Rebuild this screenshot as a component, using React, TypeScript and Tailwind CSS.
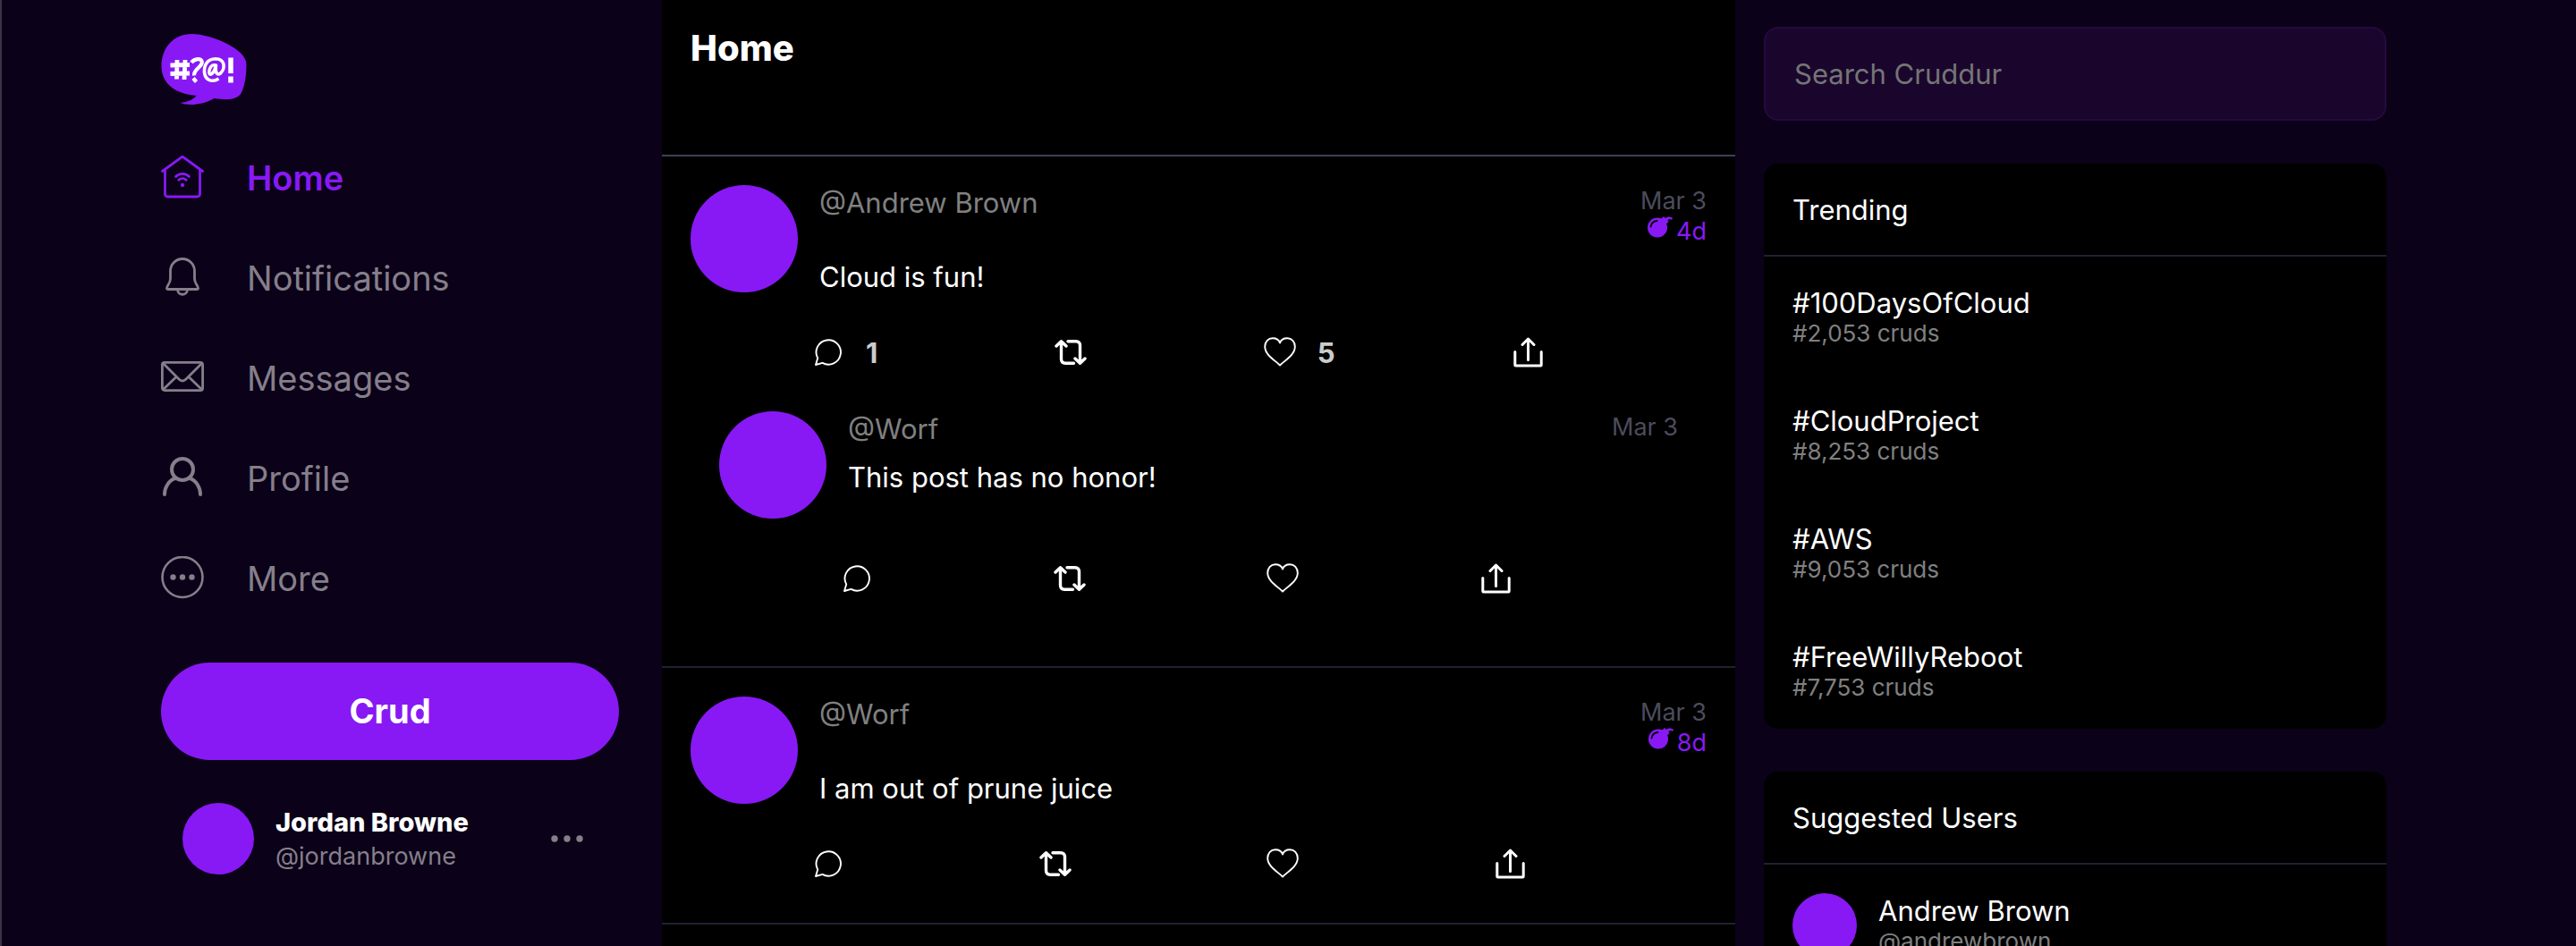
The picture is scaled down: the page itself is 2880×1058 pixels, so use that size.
import React from "react";

type IconProps = { className?: string };

const line = {
  fill: "none",
  stroke: "currentColor",
  strokeLinecap: "round" as const,
  strokeLinejoin: "round" as const,
};

function Logo() {
  return (
    <svg viewBox="0 0 95 80" className="h-20 w-24" role="img" aria-label="Cruddur">
      <path
        fill="#8819f5"
        d="M34 0C54 0 95 16 95 34C95 50 92 62 88 68C82 74 72 74 59 72C50 77 41 79 33 79C28 79 24 78 21 77C30 76 36 73 39 69C16 67 0 56 0 36C0 16 13 0 34 0Z"
      />
      <g fill="none" stroke="#fff" strokeWidth="4.800" strokeLinecap="butt" strokeLinejoin="round">
        <path d="M17.500 29L17 50.500M26.500 29L25.500 51M10 35L31.500 34.500M10 44.500L31.500 44" />
        <path strokeWidth="4.200" d="M33.500 32C37 27.500 45 26.500 45.300 31.500C45.500 37 36 39 36.500 46.500M35.500 49.500L39 53.500" />
        <path strokeWidth="3.600" d="M60 35C56 33.500 53 39 53.300 43C54 48 59 44 61 35C60 43 62 47 66 44C72 38 71 28 60.500 27.800C51 28 47.500 35 48 43C49 52 57 54.500 64 50" />
        <path strokeWidth="5.500" d="M77.500 26.500L77.500 44M77.500 47.500L77.500 54.500" />
      </g>
    </svg>
  );
}

function HomeIcon({ className }: IconProps) {
  return (
    <svg viewBox="0 0 48 48" className={className} {...line} strokeWidth="2.800">
      <path d="M1.500 17.500L24 1.100L46.500 17.500" />
      <path d="M4.500 16.500V43A3 3 0 0 0 7.500 46H40.500A3 3 0 0 0 43.500 43V16.500" />
      <path d="M16.500 23.500C20.500 19.300 27.500 19.300 31.500 23.500M19.800 27.300C22.200 25 25.800 25 28.200 27.300" />
      <circle cx="24" cy="33" r="2.200" fill="currentColor" stroke="none" />
    </svg>
  );
}

function BellIcon({ className }: IconProps) {
  return (
    <svg viewBox="0 0 48 48" className={className} {...line} strokeWidth="2.800">
      <path d="M10.500 17A13.500 13.500 0 0 1 37.500 17V25.500C37.500 31.500 41.500 33 41.500 36.500Q41.500 37.500 40 37.500H8Q6.500 37.500 6.500 36.500C6.500 33 10.500 31.500 10.500 25.500Z" />
      <path d="M18.500 38C19 45 29 45 29.500 38" />
    </svg>
  );
}

function MailIcon({ className }: IconProps) {
  return (
    <svg viewBox="0 0 48 48" className={className} {...line} strokeWidth="2.800">
      <rect x="1.400" y="7.400" width="45.200" height="31.200" rx="2.500" />
      <path d="M2.500 8.500L20 26C22.500 28.500 25.500 28.500 28 26L45.500 8.500M2.500 37.500L16.500 24M45.500 37.500L31.500 24" />
    </svg>
  );
}

function ProfileIcon({ className }: IconProps) {
  return (
    <svg viewBox="0 0 48 48" className={className} {...line} strokeWidth="4">
      <circle cx="24" cy="15" r="12" />
      <path d="M4 43C4 35 9 27 16 25M44 43C44 35 39 27 32 25" />
    </svg>
  );
}

function MoreIcon({ className }: IconProps) {
  return (
    <svg viewBox="0 0 48 48" className={className} {...line} strokeWidth="2.600">
      <circle cx="24" cy="23.500" r="22.500" />
      <g fill="currentColor" stroke="none">
        <circle cx="13.500" cy="23.500" r="3.200" />
        <circle cx="24" cy="23.500" r="3.200" />
        <circle cx="34.500" cy="23.500" r="3.200" />
      </g>
    </svg>
  );
}

function ReplyIcon() {
  return (
    <svg viewBox="0 0 30 30" className="size-[30px]" {...line} strokeWidth="1.900">
      <path d="M1 29L3.200 21.500A13.700 13.700 0 1 1 8.500 26.900Z" />
    </svg>
  );
}

function RepostIcon() {
  return (
    <svg viewBox="0 0 36 28" className="h-7 w-9" {...line} strokeWidth="3.400">
      <path d="M2 7L7.500 1.800L13 7M7.500 3V21.500Q7.500 26.200 12.200 26.200H21.500" />
      <path d="M34 21L28.500 26.200L23 21M28.500 25V6.500Q28.500 1.800 23.800 1.800H15" />
    </svg>
  );
}

function HeartIcon() {
  return (
    <svg viewBox="0 0 36 34" className="h-[34px] w-9" {...line} strokeWidth="1.900">
      <path d="M18 31.500C14 27 1.200 20.500 1.200 10.800C1.200 5 5 1.200 9.800 1.200C14 1.200 17 3.500 18 6.500C19 3.500 22 1.200 26.200 1.200C31 1.200 34.800 5 34.800 10.800C34.800 20.500 22 27 18 31.500Z" />
    </svg>
  );
}

function ShareIcon() {
  return (
    <svg viewBox="0 0 33 34" className="h-[34px] w-[33px]" {...line} strokeWidth="3">
      <path d="M10 8.500L16.500 2L23 8.500M16.500 3V25.500M1.800 16.500V31.300Q1.800 32.100 2.600 32.100H30.400Q31.200 32.100 31.200 31.300V16.500" />
    </svg>
  );
}

function BombIcon() {
  return (
    <svg viewBox="0 0 28 24" className="h-6 w-7" aria-hidden="true">
      <circle cx="11" cy="12.500" r="11" fill="#8819f5" />
      <path fill="#8819f5" d="M14 4L18 0L20 2C22 0 26 0 28 2L27 4C25 2.500 23.500 3 22.500 4.500L23.500 6L19 10Z" />
      <path d="M3.500 11.500C4 8 6.500 5.500 10.500 5" fill="none" stroke="#000" strokeWidth="1.800" strokeLinecap="round" />
    </svg>
  );
}

const nav = [
  { label: "Home", Icon: HomeIcon, active: true },
  { label: "Notifications", Icon: BellIcon },
  { label: "Messages", Icon: MailIcon },
  { label: "Profile", Icon: ProfileIcon },
  { label: "More", Icon: MoreIcon },
];

function Sidebar() {
  return (
    <aside className="flex w-[560px] shrink-0 flex-col pr-12 pt-[38px]">
      <Logo />
      <nav className="mt-6 flex flex-col">
        {nav.map(({ label, Icon, active }) => (
          <a
            key={label}
            href="#"
            className={
              active
                ? "flex h-28 items-center gap-12 text-[38px] font-semibold text-[#8819f5]"
                : "flex h-28 items-center gap-12 text-[38px] text-[#857f8b]"
            }
          >
            <Icon className="size-12 shrink-0" />
            <span className="pt-0.5">{label}</span>
          </a>
        ))}
      </nav>
      <button className="mt-[39px] h-[109px] rounded-full bg-[#8819f5] text-[38px] font-bold text-white">
        Crud
      </button>
      <button className="mt-12 flex items-center px-6 text-left leading-[38px]">
        <span className="size-20 shrink-0 rounded-full bg-[#8819f5]" />
        <span className="ml-6 grow pt-0.5">
          <span className="block text-[29px] font-extrabold text-white">Jordan Browne</span>
          <span className="block text-[27px] text-[#857f8b]">@jordanbrowne</span>
        </span>
        <svg viewBox="0 0 36 8" className="mr-4 h-2 w-9 fill-[#857f8b]" aria-label="Account menu">
          <circle cx="4" cy="4" r="3.700" />
          <circle cx="18" cy="4" r="3.700" />
          <circle cx="32" cy="4" r="3.700" />
        </svg>
      </button>
    </aside>
  );
}

type PostData = {
  handle: string;
  message: string;
  replies?: number;
  likes?: number;
  expires?: string;
  reply?: PostData;
};

const posts: PostData[] = [
  {
    handle: "@Andrew Brown",
    message: "Cloud is fun!",
    replies: 1,
    likes: 5,
    expires: "4d",
    reply: { handle: "@Worf", message: "This post has no honor!" },
  },
  { handle: "@Worf", message: "I am out of prune juice", expires: "8d" },
];

function Action({ label, count, children }: { label: string; count?: number; children: React.ReactNode }) {
  return (
    <button
      aria-label={label}
      className="flex h-[68px] flex-auto items-center gap-6 px-4 text-[31px] font-bold text-white"
    >
      <span className="flex w-9 justify-center">{children}</span>
      {count !== undefined && <span className="pt-0.5 text-[#cccccc]">{count}</span>}
    </button>
  );
}

function Post({ post }: { post: PostData }) {
  return (
    <div>
      <div className="flex items-start gap-6">
        <span className="size-[120px] shrink-0 rounded-full bg-[#8819f5]" />
        <div className="flex min-h-[123px] grow flex-col">
          <div className="flex items-start justify-between">
            <span className="text-[31px] leading-10 text-[#808080]">{post.handle}</span>
            <div className="flex flex-col items-end pt-px text-[27px] leading-[34px]">
              <time className="text-[#4c4c5c]">Mar 3</time>
              {post.expires && (
                <span className="flex items-start gap-1 text-[#8819f5]">
                  <BombIcon />
                  {post.expires}
                </span>
              )}
            </div>
          </div>
          <p className="mt-3.5 text-[31px] leading-10 text-white">{post.message}</p>
        </div>
      </div>
      <div className="ml-[120px] mt-[30px] flex">
        <Action label="Reply" count={post.replies}><ReplyIcon /></Action>
        <Action label="Repost"><RepostIcon /></Action>
        <Action label="Like" count={post.likes}><HeartIcon /></Action>
        <Action label="Share"><ShareIcon /></Action>
      </div>
      {post.reply && (
        <div className="p-8">
          <Post post={post.reply} />
        </div>
      )}
    </div>
  );
}

function Feed() {
  return (
    <main className="w-[1200px] shrink-0 bg-black">
      <header className="h-[175px] border-b-2 border-[#3e4056] px-8 pt-[30px]">
        <h1 className="text-[40px] font-extrabold leading-[48px] text-white">Home</h1>
      </header>
      {posts.map((p) => (
        <article key={p.message} className="border-b-2 border-[#1f2133] p-8">
          <Post post={p} />
        </article>
      ))}
    </main>
  );
}

const trends = [
  ["#100DaysOfCloud", "#2,053 cruds"],
  ["#CloudProject", "#8,253 cruds"],
  ["#AWS", "#9,053 cruds"],
  ["#FreeWillyReboot", "#7,753 cruds"],
];

function Rail() {
  return (
    <aside className="flex min-w-0 flex-col gap-12 px-8 pt-[30px] text-[31px] leading-10 text-white">
      <input
        type="search"
        aria-label="Search Cruddur"
        placeholder="Search Cruddur"
        className="h-[105px] w-[696px] rounded-2xl border-2 border-[#26093f] bg-[#1a062d] px-8 placeholder:text-[#757575]"
      />
      <section className="rounded-2xl bg-black">
        <h2 className="border-b-2 border-[#1f2133] px-8 pb-[30px] pt-8">Trending</h2>
        {trends.map(([tag, count]) => (
          <a key={tag} href="#" className="block p-8">
            <span className="block">{tag}</span>
            <span className="block text-[26px] leading-7 text-[#808080]">{count}</span>
          </a>
        ))}
      </section>
      <section className="rounded-2xl bg-black">
        <h2 className="border-b-2 border-[#1f2133] px-8 pb-[30px] pt-8">Suggested Users</h2>
        <a href="#" className="flex gap-6 p-8">
          <span className="size-[72px] shrink-0 rounded-full bg-[#8819f5]" />
          <span>
            <span className="block">Andrew Brown</span>
            <span className="block text-[26px] leading-7 text-[#808080]">@andrewbrown</span>
          </span>
        </a>
      </section>
    </aside>
  );
}

export default function App() {
  return (
    <div className="h-screen overflow-hidden border-l-2 border-[#3a3444] bg-[#0b0118] pr-0.5 font-['Inter',sans-serif]">
      <div className="flex min-h-full justify-center">
        <Sidebar />
        <Feed />
        <Rail />
      </div>
    </div>
  );
}
